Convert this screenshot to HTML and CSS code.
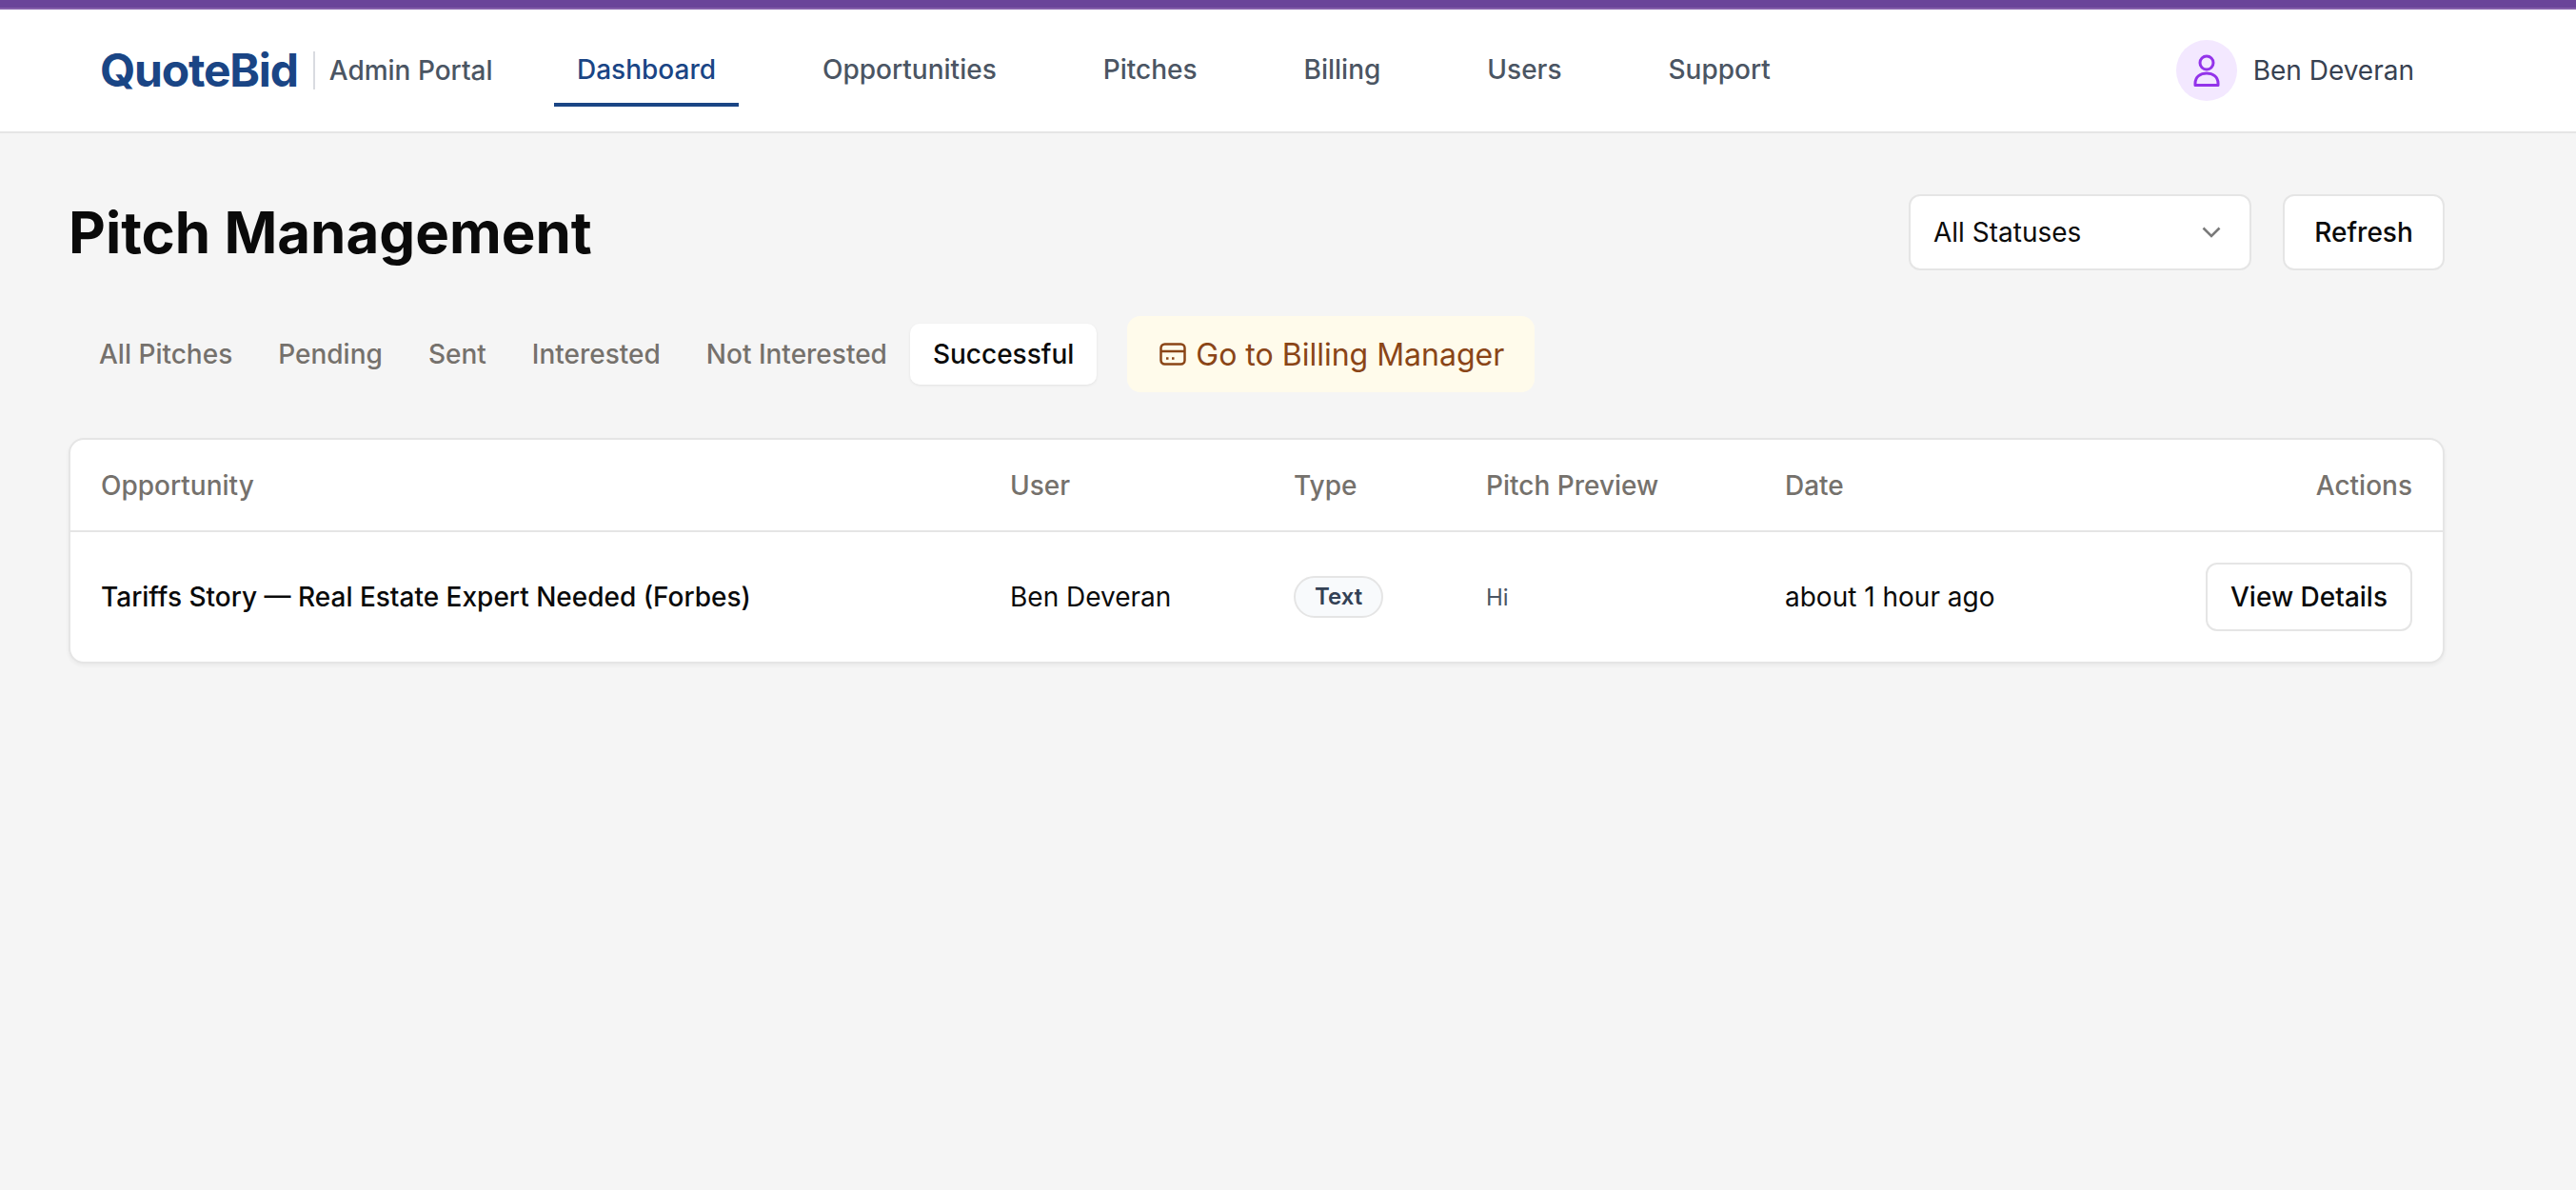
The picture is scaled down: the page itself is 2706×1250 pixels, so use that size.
FILE: index.html
```html
<!DOCTYPE html>
<html lang="en">
<head>
<meta charset="utf-8">
<title>Pitch Management</title>
<link rel="stylesheet" href="styles.css">
</head>
<body>
<div class="topbar"></div>
<header class="header">
  <div class="brand">
    <span class="logo">QuoteBid</span>
    <span class="portal">Admin Portal</span>
  </div>
  <nav class="nav">
    <a class="nav-link active">Dashboard</a>
    <a class="nav-link">Opportunities</a>
    <a class="nav-link">Pitches</a>
    <a class="nav-link">Billing</a>
    <a class="nav-link">Users</a>
    <a class="nav-link">Support</a>
  </nav>
  <div class="user">
    <span class="avatar">
      <svg class="avatar-icon" viewBox="0 0 28 34" fill="none" stroke="#9333ea" stroke-width="3">
        <circle cx="14" cy="9" r="7"/>
        <path d="M2 32.5v-2C2 23.5 7.5 20 14 20s12 3.500 12 10.500v2z" stroke-linejoin="round"/>
      </svg>
    </span>
    <span class="user-name">Ben Deveran</span>
  </div>
</header>
<main class="main">
  <div class="title-row">
    <h1 class="title">Pitch Management</h1>
    <div class="controls">
      <div class="select">
        <span>All Statuses</span>
        <svg class="chevron" viewBox="0 0 20 12" fill="none" stroke="#7a7a7a" stroke-width="2.600"><path d="M1.500 1.500L10 10l8.500-8.500"/></svg>
      </div>
      <button class="btn refresh">Refresh</button>
    </div>
  </div>
  <div class="tabs-row">
    <div class="tabs">
      <span class="tab">All Pitches</span>
      <span class="tab">Pending</span>
      <span class="tab">Sent</span>
      <span class="tab">Interested</span>
      <span class="tab">Not Interested</span>
      <span class="tab selected">Successful</span>
    </div>
    <a class="billing">
      <svg class="billing-icon" viewBox="0 0 28 24" fill="none" stroke="#8a4517" stroke-width="2.500">
        <rect x="1.500" y="1.500" width="25" height="21" rx="4"/>
        <path d="M1.500 9h25"/>
        <path d="M7 16.500h2.500M13 16.500h2.500"/>
      </svg>
      Go to Billing Manager
    </a>
  </div>
  <div class="card">
    <table class="table">
      <colgroup>
        <col class="col-opp"><col class="col-user"><col class="col-type"><col class="col-preview"><col class="col-date"><col class="col-actions">
      </colgroup>
      <thead>
        <tr>
          <th>Opportunity</th>
          <th>User</th>
          <th>Type</th>
          <th>Pitch Preview</th>
          <th>Date</th>
          <th class="right">Actions</th>
        </tr>
      </thead>
      <tbody>
        <tr>
          <td class="opp">Tariffs Story — Real Estate Expert Needed (Forbes)</td>
          <td>Ben Deveran</td>
          <td><span class="badge">Text</span></td>
          <td class="preview">Hi</td>
          <td>about 1 hour ago</td>
          <td class="right"><button class="btn view">View Details</button></td>
        </tr>
      </tbody>
    </table>
  </div>
</main>
</body>
</html>
```
FILE: styles.css
```css
* { box-sizing: border-box; }
html, body { margin: 0; height: 100%; }
body {
  background: #f5f5f5;
  font-family: Inter, "Noto Sans", sans-serif;
  font-size: 28px;
  color: #0a0a0a;
}
.topbar {
  height: 10px;
  background: #6a4499;
  border-bottom: 2px solid #8560ab;
}
.header {
  display: flex;
  align-items: center;
  height: 130px;
  padding: 0 0 0 105px;
  background: #fff;
  border-bottom: 2px solid #e5e5e5;
}
.brand { display: flex; align-items: center; width: 477px; }
.logo {
  font-size: 48px;
  font-weight: 700;
  letter-spacing: -1.2px;
  color: #1a4585;
  padding-right: 16px;
  border-right: 2px solid #d9dbe0;
  height: 40px;
  line-height: 40px;
}
.portal { margin-left: 15px; color: #4b5563; font-weight: 500; }
.nav { display: flex; gap: 64px; }
.nav-link {
  display: flex;
  align-items: center;
  padding: 6px 24px 0;
  height: 80px;
  margin-top: -4px;
  color: #4b5563;
  font-weight: 500;
  border-bottom: 4px solid transparent;
}
.nav-link.active { color: #1a4585; border-bottom-color: #1a4585; }
.user { display: flex; align-items: center; gap: 17px; margin-left: auto; margin-right: 170px; }
.avatar {
  display: flex;
  align-items: center;
  justify-content: center;
  width: 64px;
  height: 64px;
  border-radius: 50%;
  background: #f3e8ff;
}
.avatar-icon { width: 28px; height: 34px; }
.user-name { color: #374151; }
.main { padding: 64px 138px 0 72px; }
.title-row { display: flex; align-items: center; justify-content: space-between; height: 80px; }
.title { margin: 0; font-size: 60px; font-weight: 700; }
.controls { display: flex; gap: 33px; }
.select {
  display: flex;
  align-items: center;
  justify-content: space-between;
  width: 360px;
  height: 80px;
  padding: 0 30px 0 24px;
  background: #fff;
  border: 2px solid #e5e5e5;
  border-radius: 12px;
}
.chevron { width: 20px; height: 12px; }
.btn {
  font-family: inherit;
  font-size: 28px;
  font-weight: 500;
  color: #0a0a0a;
  background: #fff;
  border: 2px solid #e5e5e5;
  border-radius: 12px;
}
.refresh { width: 170px; height: 80px; padding: 0; }
.tabs-row { display: flex; align-items: center; gap: 24px; margin-top: 48px; }
.tabs { display: flex; align-items: center; padding: 0 8px; height: 80px; }
.tab {
  display: flex;
  align-items: center;
  height: 64px;
  padding: 0 24px;
  color: #75716c;
  font-weight: 500;
  border-radius: 10px;
}
.tab.selected { background: #fff; color: #0a0a0a; box-shadow: 0 1px 3px rgba(0, 0, 0, .08); }
.billing {
  display: flex;
  align-items: center;
  gap: 10px;
  height: 80px;
  padding: 0 32px 0 34px;
  background: #fffbeb;
  color: #8a4517;
  font-size: 32px;
  border-radius: 14px;
}
.billing-icon { width: 28px; height: 24px; }
.card {
  margin-top: 48px;
  background: #fff;
  border: 2px solid #e5e5e5;
  border-radius: 16px;
  box-shadow: 0 2px 4px rgba(0, 0, 0, .05);
  overflow: hidden;
}
.table { width: 100%; border-collapse: collapse; table-layout: fixed; }
.col-opp { width: 955px; }
.col-user { width: 298px; }
.col-type { width: 202px; }
.col-preview { width: 314px; }
.col-date { width: 360px; }
th {
  height: 96px;
  padding: 0 32px;
  text-align: left;
  font-weight: 500;
  color: #75716c;
  border-bottom: 2px solid #e5e5e5;
}
td { height: 137px; padding: 0 32px; font-weight: 400; }
th.right, td.right { text-align: right; }
.opp { font-weight: 500; }
.badge {
  display: inline-block;
  height: 44px;
  line-height: 40px;
  padding: 0 20px;
  font-size: 24px;
  font-weight: 600;
  color: #334155;
  background: #f8fafc;
  border: 2px solid #e5e5e5;
  border-radius: 22px;
}
.preview { font-size: 24px; color: #4b5563; }
.view { width: 217px; height: 72px; padding: 0; }
```
